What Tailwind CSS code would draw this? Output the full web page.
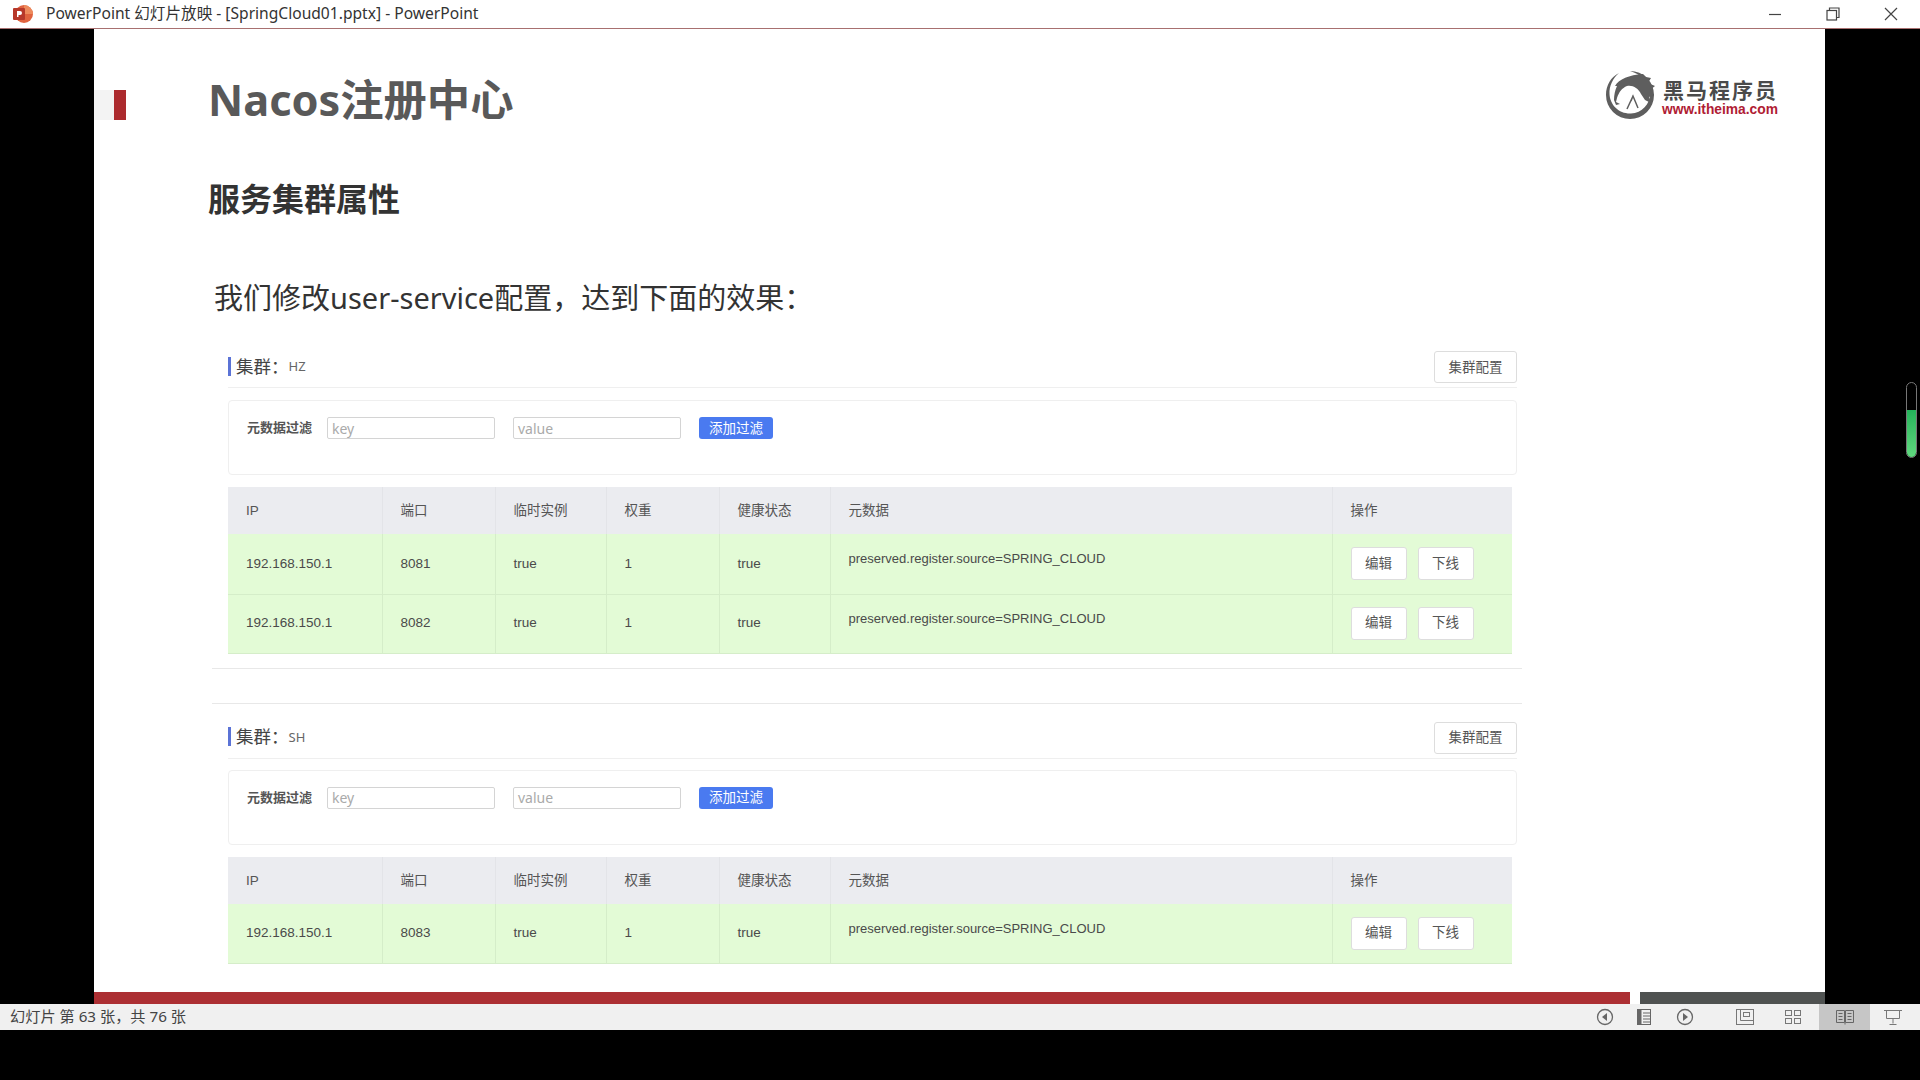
<!doctype html>
<html>
<head>
  <meta charset="UTF-8">
  <script src="https://cdn.jsdelivr.net/npm/@tailwindcss/browser@4"></script>
</head>
<body class="bg-black">
<div class="w-[1920px] h-[1080px] flex flex-col overflow-hidden bg-black font-['Noto_Sans','Noto_Sans_CJK_SC',sans-serif]">

  <!-- title bar -->
  <div class="h-[29px] shrink-0 bg-white border-b border-[#a87070] flex items-center text-[#333]">
    <svg class="ml-[12px] w-[22px] h-[22px]" viewBox="0 0 22 22">
      <circle cx="12" cy="11" r="9" fill="#e0633f"/>
      <path d="M12 2a9 9 0 0 1 9 9h-9z" fill="#ed8a5c"/>
      <rect x="1" y="5" width="12" height="12" rx="1" fill="#b7382a"/>
      <path d="M5 14V8h3a2 2 0 0 1 0 4H6.500v2z" fill="#fff"/>
    </svg>
    <div class="ml-[12px] text-[15.600px] leading-none whitespace-nowrap">PowerPoint 幻灯片放映 - [SpringCloud01.pptx] - PowerPoint</div>
    <div class="ml-auto flex items-center text-[#444]">
      <svg class="w-[14px] h-[14px] mr-[44px]" viewBox="0 0 14 14"><path d="M1 7.500h12" stroke="currentColor" stroke-width="1.200"/></svg>
      <svg class="w-[14px] h-[14px] mr-[44px]" viewBox="0 0 14 14" fill="none" stroke="currentColor" stroke-width="1.200"><rect x="1" y="3.500" width="9.500" height="9.500"/><path d="M3.500 3.500V1h9.500v9.500h-2.500"/></svg>
      <svg class="w-[14px] h-[14px] mr-[22px]" viewBox="0 0 14 14" fill="none" stroke="currentColor" stroke-width="1.200"><path d="M1 1l12 12M13 1L1 13"/></svg>
    </div>
  </div>

  <!-- slide area -->
  <div class="h-[975px] shrink-0 flex relative">
    <div class="w-[94px] shrink-0 bg-black"></div>
    <div class="w-[1731px] shrink-0 bg-white flex flex-col">

      <div class="mt-[41px] h-[60px] flex items-center">
        <div class="w-[20px] h-[30px] mt-[10px] bg-[#f3f3f3]"></div>
        <div class="w-[12px] h-[30px] mt-[10px] bg-[#ac2a2e]"></div>
        <div class="ml-[82px] text-[43.300px] leading-none font-bold text-[#595959] whitespace-nowrap">Nacos注册中心</div>
        <div class="ml-auto mr-[47px] -mt-[10px] flex items-center">
          <svg class="w-[50px] h-[48px]" viewBox="0 0 50 48">
            <path fill-rule="evenodd" d="M25 0a24 24 0 1 1 0 48a24 24 0 0 1-24-24C1 14 6 6 14 2C8 7 4 15 4.500 23C5 34 14 43 26 42.500C37 42 45 33 45 23C45 12 36 3 25 0z" fill="#5e5e5e"/>
            <path d="M10 15C14 8 24 4 38 3l3 3 5 1-3 5 7 3-5 4 4 5-5 2 2 6-6-3-4-6c-3-6-8-9-14-8-5 2-8 6-10 12l-1 4 4 2-4 1-2-5c0-5 1-10 3-14z" fill="#5e5e5e"/>
            <path d="M22 38l6-13 5 12M28 25l-2 5" fill="none" stroke="#5e5e5e" stroke-width="1.500"/>
          </svg>
          <div class="ml-[7px] mt-[5px] flex flex-col items-end">
            <div class="text-[21px] leading-[24px] font-bold text-[#4a4a4a] tracking-[2px] whitespace-nowrap">黑马程序员</div>
            <div class="text-[13.800px] leading-[16px] font-bold text-[#b01c34] font-['Liberation_Sans',sans-serif] whitespace-nowrap">www.itheima.com</div>
          </div>
        </div>
      </div>

      <div class="mt-[49px] ml-[114px] h-[40px] flex items-center text-[32px] font-bold text-[#333] leading-none">服务集群属性</div>

      <div class="mt-[58px] ml-[120px] h-[40px] flex items-center text-[29px] text-[#333] leading-none whitespace-nowrap">我们修改user-service配置，达到下面的效果：</div>

      <!-- cluster HZ -->
      <div class="mt-[34px] ml-[134px] w-[1289px]">
        <div class="h-[37px] pb-[4px] border-b border-[#efefef] flex items-center justify-between">
          <div class="flex items-center -mt-[2px]">
            <div class="w-[3px] h-[19px] bg-[#5b73d6]"></div>
            <div class="ml-[5px] text-[17.500px] text-[#444]">集群：</div>
            <div class="mt-[2px] text-[13px] text-[#666]">HZ</div>
          </div>
          <div class="w-[83px] h-[32px] border border-[#ddd] rounded-[3px] flex items-center justify-center text-[13.500px] text-[#555]">集群配置</div>
        </div>

        <div class="mt-[12px] h-[75px] border border-[#efefef] rounded-[4px] pl-[18px] pt-[16px] flex items-start">
          <div class="w-[78px] h-[22px] flex items-center text-[13px] font-bold text-[#555] whitespace-nowrap">元数据过滤</div>
          <div class="ml-[2px] w-[168px] h-[22px] border border-[#d4d4d4] rounded-[2px] pl-[4px] flex items-center text-[14px] text-[#aaa]">key</div>
          <div class="ml-[18px] w-[168px] h-[22px] border border-[#d4d4d4] rounded-[2px] pl-[4px] flex items-center text-[14px] text-[#aaa]">value</div>
          <div class="ml-[18px] w-[74px] h-[22px] bg-[#4a7af0] rounded-[3px] flex items-center justify-center text-[13.500px] text-white">添加过滤</div>
        </div>

        <table class="mt-[12px] w-[1284px] table-fixed border-collapse text-[13.500px] text-[#4a4a4a] font-['Liberation_Sans','Noto_Sans_CJK_SC',sans-serif]">
          <colgroup><col class="w-[154px]"><col class="w-[113px]"><col class="w-[111px]"><col class="w-[113px]"><col class="w-[111px]"><col class="w-[502px]"><col class="w-[180px]"></colgroup>
          <tr class="h-[47px] bg-[#ebecf0] text-[#555]">
            <td class="pl-[18px] pt-[2px] border-r border-[#e3e4e8]">IP</td>
            <td class="pl-[18px] pt-[2px] border-r border-[#e3e4e8]">端口</td>
            <td class="pl-[18px] pt-[2px] border-r border-[#e3e4e8]">临时实例</td>
            <td class="pl-[18px] pt-[2px] border-r border-[#e3e4e8]">权重</td>
            <td class="pl-[18px] pt-[2px] border-r border-[#e3e4e8]">健康状态</td>
            <td class="pl-[18px] pt-[2px] border-r border-[#e3e4e8]">元数据</td>
            <td class="pl-[18px] pt-[2px]">操作</td>
          </tr>
          <tr class="h-[60px] bg-[#e3fbd6] border-b border-[#d5edc9]">
            <td class="pl-[18px] border-r border-[#d5edc9]">192.168.150.1</td>
            <td class="pl-[18px] border-r border-[#d5edc9]">8081</td>
            <td class="pl-[18px] border-r border-[#d5edc9]">true</td>
            <td class="pl-[18px] border-r border-[#d5edc9]">1</td>
            <td class="pl-[18px] border-r border-[#d5edc9]">true</td>
            <td class="pl-[18px] pb-[10px] border-r border-[#d5edc9] text-[13px]">preserved.register.source=SPRING_CLOUD</td>
            <td class="pl-[18px]"><div class="flex gap-[11px]"><div class="w-[56px] h-[33px] bg-white border border-[#ddd] rounded-[3px] flex items-center justify-center text-[#555]">编辑</div><div class="w-[56px] h-[33px] bg-white border border-[#ddd] rounded-[3px] flex items-center justify-center text-[#555]">下线</div></div></td>
          </tr>
          <tr class="h-[59px] bg-[#e3fbd6] border-b border-[#d5edc9]">
            <td class="pl-[18px] border-r border-[#d5edc9]">192.168.150.1</td>
            <td class="pl-[18px] border-r border-[#d5edc9]">8082</td>
            <td class="pl-[18px] border-r border-[#d5edc9]">true</td>
            <td class="pl-[18px] border-r border-[#d5edc9]">1</td>
            <td class="pl-[18px] border-r border-[#d5edc9]">true</td>
            <td class="pl-[18px] pb-[10px] border-r border-[#d5edc9] text-[13px]">preserved.register.source=SPRING_CLOUD</td>
            <td class="pl-[18px]"><div class="flex gap-[11px]"><div class="w-[56px] h-[33px] bg-white border border-[#ddd] rounded-[3px] flex items-center justify-center text-[#555]">编辑</div><div class="w-[56px] h-[33px] bg-white border border-[#ddd] rounded-[3px] flex items-center justify-center text-[#555]">下线</div></div></td>
          </tr>
        </table>
      </div>

      <div class="mt-[14px] ml-[118px] w-[1310px] h-px bg-[#e8e8e8]"></div>
      <div class="mt-[34px] ml-[118px] w-[1310px] h-px bg-[#e8e8e8]"></div>

      <!-- cluster SH -->
      <div class="mt-[18px] ml-[134px] w-[1289px]">
        <div class="h-[37px] pb-[4px] border-b border-[#efefef] flex items-center justify-between">
          <div class="flex items-center -mt-[2px]">
            <div class="w-[3px] h-[19px] bg-[#5b73d6]"></div>
            <div class="ml-[5px] text-[17.500px] text-[#444]">集群：</div>
            <div class="mt-[2px] text-[13px] text-[#666]">SH</div>
          </div>
          <div class="w-[83px] h-[32px] border border-[#ddd] rounded-[3px] flex items-center justify-center text-[13.500px] text-[#555]">集群配置</div>
        </div>

        <div class="mt-[11px] h-[75px] border border-[#efefef] rounded-[4px] pl-[18px] pt-[16px] flex items-start">
          <div class="w-[78px] h-[22px] flex items-center text-[13px] font-bold text-[#555] whitespace-nowrap">元数据过滤</div>
          <div class="ml-[2px] w-[168px] h-[22px] border border-[#d4d4d4] rounded-[2px] pl-[4px] flex items-center text-[14px] text-[#aaa]">key</div>
          <div class="ml-[18px] w-[168px] h-[22px] border border-[#d4d4d4] rounded-[2px] pl-[4px] flex items-center text-[14px] text-[#aaa]">value</div>
          <div class="ml-[18px] w-[74px] h-[22px] bg-[#4a7af0] rounded-[3px] flex items-center justify-center text-[13.500px] text-white">添加过滤</div>
        </div>

        <table class="mt-[12px] w-[1284px] table-fixed border-collapse text-[13.500px] text-[#4a4a4a] font-['Liberation_Sans','Noto_Sans_CJK_SC',sans-serif]">
          <colgroup><col class="w-[154px]"><col class="w-[113px]"><col class="w-[111px]"><col class="w-[113px]"><col class="w-[111px]"><col class="w-[502px]"><col class="w-[180px]"></colgroup>
          <tr class="h-[47px] bg-[#ebecf0] text-[#555]">
            <td class="pl-[18px] pt-[2px] border-r border-[#e3e4e8]">IP</td>
            <td class="pl-[18px] pt-[2px] border-r border-[#e3e4e8]">端口</td>
            <td class="pl-[18px] pt-[2px] border-r border-[#e3e4e8]">临时实例</td>
            <td class="pl-[18px] pt-[2px] border-r border-[#e3e4e8]">权重</td>
            <td class="pl-[18px] pt-[2px] border-r border-[#e3e4e8]">健康状态</td>
            <td class="pl-[18px] pt-[2px] border-r border-[#e3e4e8]">元数据</td>
            <td class="pl-[18px] pt-[2px]">操作</td>
          </tr>
          <tr class="h-[60px] bg-[#e3fbd6] border-b border-[#d5edc9]">
            <td class="pl-[18px] border-r border-[#d5edc9]">192.168.150.1</td>
            <td class="pl-[18px] border-r border-[#d5edc9]">8083</td>
            <td class="pl-[18px] border-r border-[#d5edc9]">true</td>
            <td class="pl-[18px] border-r border-[#d5edc9]">1</td>
            <td class="pl-[18px] border-r border-[#d5edc9]">true</td>
            <td class="pl-[18px] pb-[10px] border-r border-[#d5edc9] text-[13px]">preserved.register.source=SPRING_CLOUD</td>
            <td class="pl-[18px]"><div class="flex gap-[11px]"><div class="w-[56px] h-[33px] bg-white border border-[#ddd] rounded-[3px] flex items-center justify-center text-[#555]">编辑</div><div class="w-[56px] h-[33px] bg-white border border-[#ddd] rounded-[3px] flex items-center justify-center text-[#555]">下线</div></div></td>
          </tr>
        </table>
      </div>

      <!-- progress bar -->
      <div class="mt-auto h-[12px] flex">
        <div class="w-[1536px] bg-[#ac2f33]"></div>
        <div class="ml-[10px] flex-1 bg-[#4f5251]"></div>
      </div>
    </div>
    <div class="flex-1 bg-black"></div>

    <!-- pen thermometer over the black margin -->
    <div class="absolute left-[1906px] top-[353px] w-[11px] h-[76px] rounded-full border border-[#777] bg-black overflow-hidden flex flex-col justify-end">
      <div class="h-[47px] bg-gradient-to-b from-[#22b35a] to-[#5fd97f]"></div>
    </div>
  </div>

  <!-- status bar -->
  <div class="h-[26px] shrink-0 bg-[#f0f0f0] flex items-center text-[#444] relative">
    <div class="ml-[10px] text-[15.200px] leading-none whitespace-nowrap">幻灯片 第 63 张，共 76 张</div>
    <div class="ml-auto flex items-center h-full">
      <svg class="w-[18px] h-[18px] mr-[23px]" viewBox="0 0 18 18"><circle cx="9" cy="9" r="7.500" fill="none" stroke="#666" stroke-width="1.300"/><path d="M11 5v8L6 9z" fill="#666"/></svg>
      <svg class="w-[14px] h-[16px] mr-[25px]" viewBox="0 0 14 16"><rect x="0.500" y="0.500" width="13" height="15" fill="none" stroke="#666"/><rect x="0.500" y="0.500" width="4" height="15" fill="#666"/><path d="M6 4h7M6 7h7M6 10h7M6 13h7" stroke="#666"/></svg>
      <svg class="w-[18px] h-[18px] mr-[42px]" viewBox="0 0 18 18"><circle cx="9" cy="9" r="7.500" fill="none" stroke="#666" stroke-width="1.300"/><path d="M7 5v8l5-4z" fill="#666"/></svg>
      <svg class="w-[18px] h-[16px] mr-[31px]" viewBox="0 0 18 16" fill="none" stroke="#777"><rect x="0.500" y="0.500" width="17" height="15"/><path d="M4.500 0.500v11h13"/><rect x="7.500" y="3.500" width="6" height="4"/></svg>
      <svg class="w-[16px] h-[14px] mr-[18px]" viewBox="0 0 16 14" fill="none" stroke="#777"><rect x="0.500" y="0.500" width="6" height="5"/><rect x="9.500" y="0.500" width="6" height="5"/><rect x="0.500" y="8.500" width="6" height="5"/><rect x="9.500" y="8.500" width="6" height="5"/></svg>
      <div class="w-[51px] h-full bg-[#c6c6c6] flex items-center justify-center">
        <svg class="w-[18px] h-[16px]" viewBox="0 0 18 16" fill="none" stroke="#666"><path d="M0.500 1.500h8v12h-8zM9.500 1.500h8v12h-8zM2.500 4.500h4M2.500 7.500h4M2.500 10.500h4M11.500 4.500h4M11.500 7.500h4M11.500 10.500h4M9 13.500v2"/></svg>
      </div>
      <svg class="w-[18px] h-[16px] ml-[14px] mr-[18px]" viewBox="0 0 18 16" fill="none" stroke="#777"><path d="M0 1.500h18M2.500 1.500v8h13v-8M9 9.500v5M5.500 15.500h7"/></svg>
    </div>
  </div>

  <div class="flex-1 bg-black"></div>
</div>
</body>
</html>
